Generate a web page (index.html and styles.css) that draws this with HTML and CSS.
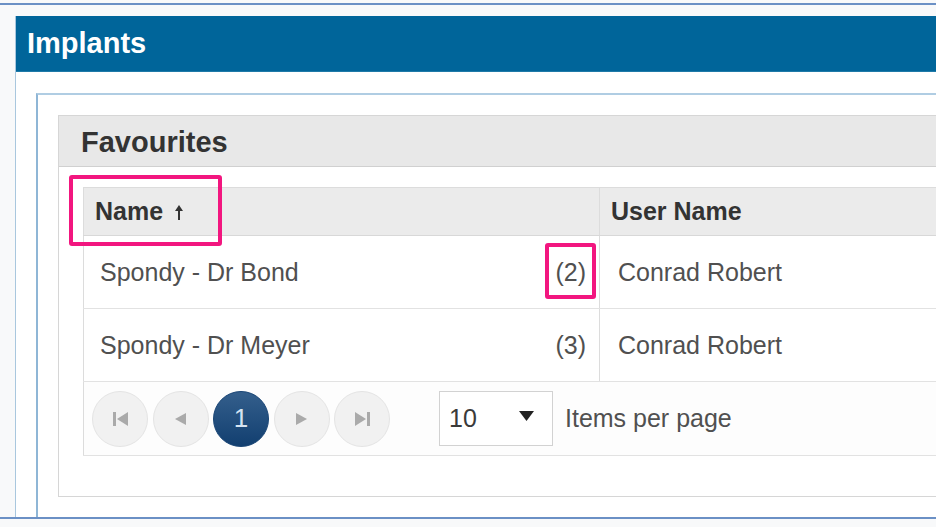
FILE: index.html
```html
<!DOCTYPE html>
<html lang="en">
    <head>
        <meta charset="UTF-8" />
        <meta name="viewport" content="width=device-width, initial-scale=1.0" />
        <title>Implants</title>
        <link rel="stylesheet" href="styles.css">
    </head>
    <body>
        <div class="frame">
            <div class="window">
                <div class="window-title">Implants</div>
                <div class="window-body">
                    <div class="panel">
                        <div class="fav">
                            <div class="fav-title">Favourites</div>
                            <div class="fav-body">
                                <div class="grid-wrap">
                                    <table class="grid">
                                        <thead>
                                            <tr>
                                                <th class="col-name">
                                                    Name
                                                    <svg class="sort-arrow" width="10" height="15" viewBox="0 0 10 15">
                                                        <path d="M5 3 L5 15" stroke="#333" stroke-width="2" />
                                                        <path d="M1 6 L5 0 L9 6 Z" fill="#333" />
                                                    </svg>
                                                </th>
                                                <th>User Name</th>
                                            </tr>
                                        </thead>
                                        <tbody>
                                            <tr>
                                                <td class="col-name">
                                                    <div class="name-cell">
                                                        <span>Spondy - Dr Bond</span>
                                                        <span>(2)</span>
                                                    </div>
                                                </td>
                                                <td>Conrad Robert</td>
                                            </tr>
                                            <tr>
                                                <td class="col-name">
                                                    <div class="name-cell">
                                                        <span>Spondy - Dr Meyer</span>
                                                        <span>(3)</span>
                                                    </div>
                                                </td>
                                                <td>Conrad Robert</td>
                                            </tr>
                                        </tbody>
                                        <tfoot>
                                            <tr>
                                                <td colspan="2" class="pager-cell">
                                                    <div class="pager">
                                                        <span class="page-btn">
                                                            <svg width="15" height="14" viewBox="0 0 15 14">
                                                                <rect x="0" y="0" width="3" height="14" fill="#aaa" />
                                                                <path d="M15 0 L4 7 L15 14 Z" fill="#aaa" />
                                                            </svg>
                                                        </span>
                                                        <span class="page-btn">
                                                            <svg width="11" height="12" viewBox="0 0 11 12">
                                                                <path d="M11 0 L0 6 L11 12 Z" fill="#aaa" />
                                                            </svg>
                                                        </span>
                                                        <span class="page-btn active">1</span>
                                                        <span class="page-btn">
                                                            <svg width="11" height="12" viewBox="0 0 11 12">
                                                                <path d="M0 0 L11 6 L0 12 Z" fill="#aaa" />
                                                            </svg>
                                                        </span>
                                                        <span class="page-btn">
                                                            <svg width="15" height="14" viewBox="0 0 15 14">
                                                                <path d="M0 0 L11 7 L0 14 Z" fill="#aaa" />
                                                                <rect x="12" y="0" width="3" height="14" fill="#aaa" />
                                                            </svg>
                                                        </span>
                                                        <div class="page-size">
                                                            <span>10</span>
                                                            <svg width="15" height="10" viewBox="0 0 15 10">
                                                                <path d="M0 0 L15 0 L7.5 10 Z" fill="#222" />
                                                            </svg>
                                                        </div>
                                                        <span class="page-label">Items per page</span>
                                                    </div>
                                                </td>
                                            </tr>
                                        </tfoot>
                                    </table>
                                    <div class="mark mark-name"></div>
                                    <div class="mark mark-count"></div>
                                </div>
                            </div>
                        </div>
                    </div>
                </div>
            </div>
        </div>
    </body>
</html>
```

FILE: styles.css
```css
body {
    font-family: "Liberation Sans", Arial, sans-serif;
    margin: 0;
    background-color: #f8f9fa;
    overflow: hidden;
}
.frame {
    margin-top: 3px;
    border-top: 2px solid #6b90c5;
    border-bottom: 2px solid #6b90c5;
    padding-top: 11px;
    height: 501px;
    overflow: hidden;
}
.window {
    margin-left: 15px;
    width: 1100px;
    height: 501px;
    border-left: 1px solid #a9c7de;
    background: white;
}
.window-title {
    height: 56px;
    line-height: 54px;
    padding-left: 11px;
    background: #00659a;
    border-bottom: 1px solid #1f7aa8;
    box-sizing: border-box;
    color: white;
    font-size: 29px;
    font-weight: bold;
}
.window-body {
    padding: 21px 0 0 20px;
}
.panel {
    border-top: 2px solid #b0cde3;
    border-left: 2px solid #8fb6d6;
    padding: 20px 0 0 20px;
    height: 600px;
}
.fav {
    border: 1px solid #d6d6d6;
    width: 1000px;
}
.fav-title {
    height: 51px;
    line-height: 52px;
    padding-left: 22px;
    box-sizing: border-box;
    background: #e8e8e8;
    border-bottom: 1px solid #d0d0d0;
    color: #333;
    font-size: 29px;
    font-weight: bold;
}
.fav-body {
    padding: 20px 0 40px 24px;
}
.grid-wrap {
    position: relative;
}
.grid {
    border-collapse: collapse;
    border: 1px solid #dcdcdc;
    width: 960px;
    font-size: 25px;
    color: #505050;
}
.grid th {
    height: 47px;
    padding: 0 12px 0 11px;
    background: #ebebeb;
    border-bottom: 1px solid #d8d8d8;
    border-left: 1px solid #dcdcdc;
    text-align: left;
    color: #333;
    font-weight: bold;
}
.grid td {
    height: 72px;
    padding: 0 13px 0 18px;
    border-bottom: 1px solid #e2e2e2;
    border-left: 1px solid #dcdcdc;
}
.grid .col-name {
    width: 516px;
    box-sizing: border-box;
}
.grid td.col-name {
    padding-left: 16px;
}
.sort-arrow {
    margin-left: 4px;
    vertical-align: 0;
}
.name-cell {
    display: flex;
    justify-content: space-between;
}
.grid td.pager-cell {
    height: 73px;
    padding: 0 0 0 8px;
    background: #fdfdfd;
}
.pager {
    display: flex;
    align-items: center;
    gap: 4.5px;
}
.page-btn {
    width: 56px;
    height: 56px;
    border-radius: 50%;
    border: 1px solid #e4e4e4;
    background: #f1f1f1;
    box-sizing: border-box;
    display: flex;
    align-items: center;
    justify-content: center;
}
.page-btn.active {
    border-color: #1a4676;
    background: linear-gradient(#345f8c, #123f70);
    color: #d6e4f2;
    font-size: 26px;
}
.page-size {
    margin-left: 44.5px;
    width: 114px;
    height: 55px;
    border: 1px solid #d2d2d2;
    background: white;
    box-sizing: border-box;
    display: flex;
    align-items: center;
    justify-content: space-between;
    padding: 0 18px 6px 9px;
    color: #3a3a3a;
}
.page-size span {
    padding-top: 6px;
}
.page-label {
    margin-left: 7.5px;
    color: #505050;
}
.mark {
    position: absolute;
    border: 4px solid #f2167f;
    border-radius: 3px;
}
.mark-name {
    left: -14px;
    top: -12px;
    width: 145px;
    height: 63px;
}
.mark-count {
    left: 462px;
    top: 56px;
    width: 43px;
    height: 48px;
}
```
